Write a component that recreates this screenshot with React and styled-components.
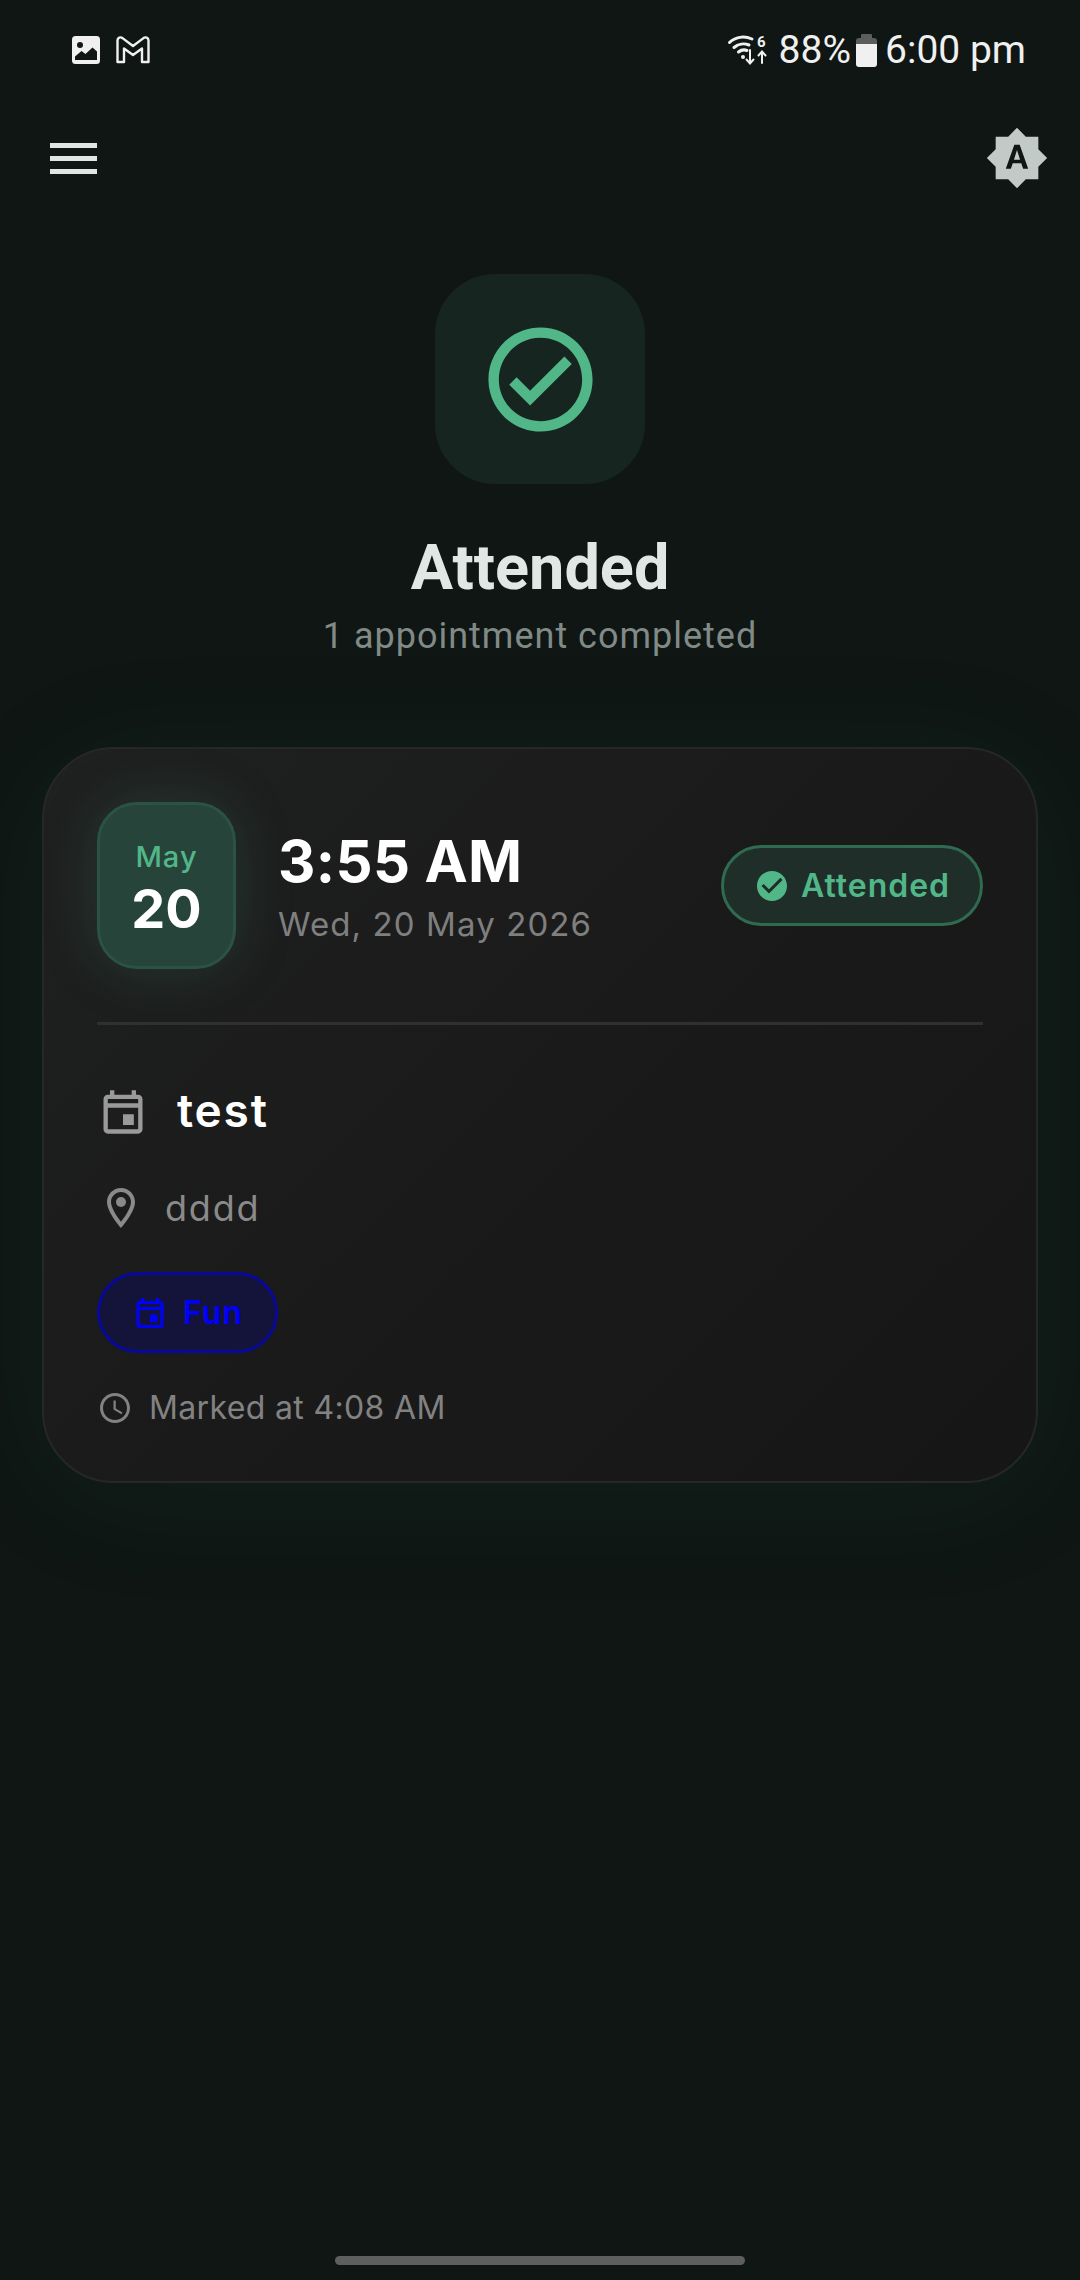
import React from "react";
import styled, { createGlobalStyle } from "styled-components";

const Global = createGlobalStyle`
  html, body { margin: 0; padding: 0; background: #0f1614; }
  * { box-sizing: border-box; }
`;

const Page = styled.div`
  width: 1080px;
  height: 2280px;
  display: flex;
  flex-direction: column;
  overflow: hidden;
  background: #0f1614;
  font-family: Inter, "Liberation Sans", sans-serif;
`;

const StatusBar = styled.div`
  height: 100px;
  padding: 0 54px 0 71px;
  display: flex;
  align-items: center;
  justify-content: space-between;
  color: #f0f0f0;
  font-family: Roboto, sans-serif;
  font-size: 39px;
`;

const StatusGroup = styled.div`
  display: flex;
  align-items: center;
  gap: ${(p) => p.$gap || 0}px;
`;

const BatteryWrap = styled.span`
  display: flex;
  margin: 0 8px 0 5px;
`;

const Percent = styled.span`
  margin-left: 11px;
`;

const WifiSvg = styled.svg`
  overflow: visible;
  flex: none;
`;

const TopBar = styled.div`
  height: 116px;
  padding: 0 31px 0 50px;
  display: flex;
  align-items: center;
  justify-content: space-between;
`;

const Burger = styled.div`
  width: 47px;
  display: flex;
  flex-direction: column;
  gap: 8px;
`;

const BurgerLine = styled.span`
  display: block;
  height: 5px;
  background: #e0e6e3;
`;

const Hero = styled.div`
  padding-top: 58px;
  display: flex;
  flex-direction: column;
  align-items: center;
`;

const HeroIcon = styled.div`
  width: 210px;
  height: 210px;
  border-radius: 60px;
  background: #16251f;
  display: flex;
  align-items: center;
  justify-content: center;
  color: #52b788;
`;

const HeroTitle = styled.h1`
  margin: 46px 0 0;
  font-family: Roboto, sans-serif;
  font-size: 63px;
  line-height: 76px;
  font-weight: 700;
  color: #e1e7e4;
`;

const HeroSub = styled.div`
  margin-top: 8px;
  font-family: Roboto, sans-serif;
  font-size: 36px;
  line-height: 44px;
  letter-spacing: 1px;
  color: #808a87;
`;

const Card = styled.section`
  margin: 89px 42px 0;
  height: 736px;
  padding: 53px 53px 0;
  border: 2px solid #262828;
  border-radius: 72px;
  background: linear-gradient(135deg, #1f2020 0%, #1a1a1a 50%, #161616 100%);
  box-shadow: 0 14px 130px rgba(40, 140, 95, 0.08);
  display: flex;
  flex-direction: column;
`;

const CardHead = styled.div`
  display: flex;
  align-items: center;
`;

const DateBox = styled.div`
  width: 139px;
  height: 167px;
  padding-top: 6px;
  border-radius: 40px;
  border: 3px solid #2b5343;
  background: #27443a;
  box-shadow: 0 0 60px rgba(82, 183, 136, 0.18);
  display: flex;
  flex-direction: column;
  align-items: center;
  justify-content: center;
  flex: none;
`;

const DateMonth = styled.div`
  font-size: 29px;
  line-height: 34px;
  font-weight: 500;
  letter-spacing: 1px;
  color: #52b788;
`;

const DateDay = styled.div`
  margin-top: 6px;
  font-size: 54px;
  line-height: 58px;
  font-weight: 700;
  color: #ffffff;
`;

const TimeBlock = styled.div`
  margin-left: 42px;
  flex: 1;
  display: flex;
  flex-direction: column;
`;

const TimeText = styled.div`
  font-size: 58px;
  line-height: 68px;
  font-weight: 700;
  letter-spacing: 0.35px;
  color: #ffffff;
`;

const DateText = styled.div`
  margin-top: 9px;
  font-size: 33px;
  line-height: 40px;
  letter-spacing: 1.1px;
  color: #7f7f7f;
`;

const Pill = styled.div`
  display: inline-flex;
  align-items: center;
  justify-content: center;
  flex: none;
  border-radius: 41px;
  height: ${(p) => p.$h}px;
  width: ${(p) => p.$w}px;
  border: 3px solid ${(p) => p.$border};
  background: ${(p) => p.$bg};
  color: ${(p) => p.$fg};
  gap: ${(p) => p.$gap}px;
  font-size: 32px;
  font-weight: 600;
  letter-spacing: 1px;
`;

const Divider = styled.div`
  margin-top: 53px;
  height: 3px;
  background: #303030;
`;

const EventRow = styled.div`
  margin-top: 61px;
  display: flex;
  align-items: center;
  gap: 28px;
  color: #ffffff;
  font-size: 46px;
  line-height: 52px;
  font-weight: 600;
  letter-spacing: 1.8px;
`;

const EventTitle = styled.span`
  margin-top: -5px;
`;

const IconSlot = styled.span`
  display: flex;
  flex: none;
  color: ${(p) => p.$color || "currentColor"};
`;

const PlaceRow = styled.div`
  margin-top: 46px;
  display: flex;
  align-items: center;
  gap: 20px;
  color: #8a8a8a;
  font-size: 36px;
  line-height: 48px;
  letter-spacing: 1.8px;
`;

const TagWrap = styled.div`
  margin-top: 40px;
  display: flex;
`;

const MarkedRow = styled.div`
  margin-top: 37px;
  display: flex;
  align-items: center;
  gap: 16px;
  color: #828282;
  font-size: 32px;
  line-height: 36px;
  letter-spacing: 0.35px;
`;

const HomeBar = styled.div`
  margin: auto auto 15px;
  width: 410px;
  height: 9px;
  border-radius: 5px;
  background: #5c5f5e;
`;

const Mi = ({ size, d, children, ...rest }) => (
  <svg width={size} height={size} viewBox="0 0 24 24" fill="currentColor" fillRule="evenodd" {...rest}>
    {d && <path d={d} />}
    {children}
  </svg>
);

const EVENT = "M19 4h-1V2h-2v2H8V2H6v2H5c-1.11 0-1.99.9-1.99 2L3 20c0 1.1.89 2 2 2h14c1.1 0 2-.9 2-2V6c0-1.1-.9-2-2-2zm0 16H5V10h14v10zm0-12H5V6h14v2zM12 13h5v5h-5z";

const GalleryIcon = () => (
  <svg width="30" height="30" viewBox="0 0 30 30">
    <rect x="1" y="1" width="28" height="28" rx="3.5" fill="#f0f0f0" />
    <circle cx="9" cy="10" r="3" fill="#0f1614" />
    <path d="M4 25v-3.5l6.5-5.5 4 3 7-6.500 4.500 4V25z" fill="#0f1614" />
  </svg>
);

const GmailIcon = () => (
  <svg width="36" height="30" viewBox="0 0 36 30" fill="none" stroke="#f0f0f0" strokeWidth="2.4" strokeLinejoin="round">
    <path d="M2.5 5.5c0-3 3-3.8 5-2.4L18 11 28.5 3.100c2-1.400 5-.6 5 2.400V27h-6.500V13.500L18 20 9 13.500V27H2.500z" />
  </svg>
);

const WifiIcon = () => (
  <WifiSvg width="40" height="32" viewBox="0 0 40 32" fill="none" stroke="#f0f0f0" strokeLinecap="round">
    <path d="M1.500 8.500C7 3 16 1.500 24 5" strokeWidth="3" />
    <path d="M6 13.500c4-3.500 10-4.500 15-2.500" strokeWidth="3" />
    <path d="M10.500 18c2.500-2 6-2.500 8.500-1.500" strokeWidth="3" />
    <circle cx="15" cy="23" r="2" fill="#f0f0f0" stroke="none" />
    <path d="M22 16v13M18.500 25.500l3.500 4 3.500-4" strokeWidth="2" />
    <path d="M34 29V18M30.500 21.500L34 17.500l3.500 4" strokeWidth="2" />
    <text x="29" y="13" fontFamily="Roboto, sans-serif" fontWeight="700" fontSize="15" fill="#f0f0f0" stroke="none">6</text>
  </WifiSvg>
);

const BatteryIcon = () => (
  <svg width="21" height="33" viewBox="0 0 21 33">
    <path d="M6 0h9a1 1 0 0 1 1 1v3h2a3 3 0 0 1 3 3v4H0V7a3 3 0 0 1 3-3h2V1a1 1 0 0 1 1-1z" fill="#5a5e5d" />
    <path d="M0 10h21v20a3 3 0 0 1-3 3H3a3 3 0 0 1-3-3z" fill="#f0f0f0" />
  </svg>
);

export default function App() {
  return (
    <Page>
      <Global />
      <StatusBar>
        <StatusGroup $gap={14}>
          <GalleryIcon />
          <GmailIcon />
        </StatusGroup>
        <StatusGroup>
          <WifiIcon />
          <Percent>88%</Percent>
          <BatteryWrap>
            <BatteryIcon />
          </BatteryWrap>
          <span>6:00 pm</span>
        </StatusGroup>
      </StatusBar>
      <TopBar>
        <Burger>
          <BurgerLine />
          <BurgerLine />
          <BurgerLine />
        </Burger>
        <IconSlot $color="#c2cac7">
          <Mi size={64} d="M10.85 12.65h2.3L12 9l-1.15 3.65zM20 8.69V4h-4.69L12 .69 8.69 4H4v4.69L.69 12 4 15.31V20h4.69L12 23.31 15.31 20H20v-4.69L23.31 12 20 8.69zM14.3 16l-.7-2h-3.2l-.7 2H7.8L11 7h2l3.2 9h-1.9z" />
        </IconSlot>
      </TopBar>
      <Hero>
        <HeroIcon>
          <Mi size={125} d="M12 2C6.48 2 2 6.48 2 12s4.48 10 10 10 10-4.48 10-10S17.52 2 12 2zm0 18c-4.41 0-8-3.59-8-8s3.59-8 8-8 8 3.59 8 8-3.59 8-8 8zm4.59-12.42L10 14.17l-2.59-2.58L6 13l4 4 8-8z" />
        </HeroIcon>
        <HeroTitle>Attended</HeroTitle>
        <HeroSub>1 appointment completed</HeroSub>
      </Hero>
      <Card>
        <CardHead>
          <DateBox>
            <DateMonth>May</DateMonth>
            <DateDay>20</DateDay>
          </DateBox>
          <TimeBlock>
            <TimeText>3:55 AM</TimeText>
            <DateText>Wed, 20 May 2026</DateText>
          </TimeBlock>
          <Pill $w={262} $h={81} $gap={11} $border="#2f6b50" $bg="#1f2e29" $fg="#52b788">
            <Mi size={36} d="M12 2C6.48 2 2 6.48 2 12s4.48 10 10 10 10-4.48 10-10S17.52 2 12 2zm-2 15l-5-5 1.41-1.41L10 14.17l7.59-7.59L19 8l-9 9z" />
            Attended
          </Pill>
        </CardHead>
        <Divider />
        <EventRow>
          <IconSlot $color="#9a9a9a">
            <Mi size={52} d={EVENT} />
          </IconSlot>
          <EventTitle>test</EventTitle>
        </EventRow>
        <PlaceRow>
          <IconSlot $color="#8a8a8a">
            <Mi size={48} d="M12 2C8.13 2 5 5.13 5 9c0 5.25 7 13 7 13s7-7.75 7-13c0-3.87-3.13-7-7-7zM7 9c0-2.76 2.24-5 5-5s5 2.240 5 5c0 2.880-2.880 7.190-5 9.880C9.920 16.210 7 11.850 7 9z">
              <circle cx="12" cy="9" r="2.500" />
            </Mi>
          </IconSlot>
          dddd
        </PlaceRow>
        <TagWrap>
          <Pill $w={181} $h={81} $gap={15} $border="#08089a" $bg="#14143a" $fg="#0000ff">
            <Mi size={36} d={EVENT} />
            Fun
          </Pill>
        </TagWrap>
        <MarkedRow>
          <IconSlot>
            <Mi size={36} d="M11.99 2C6.47 2 2 6.48 2 12s4.470 10 9.990 10C17.520 22 22 17.520 22 12S17.520 2 11.990 2zM12 20c-4.420 0-8-3.580-8-8s3.580-8 8-8 8 3.580 8 8-3.580 8-8 8zM12.500 7H11v6l5.250 3.150.750-1.230-4.500-2.670z" />
          </IconSlot>
          Marked at 4:08 AM
        </MarkedRow>
      </Card>
      <HomeBar />
    </Page>
  );
}
